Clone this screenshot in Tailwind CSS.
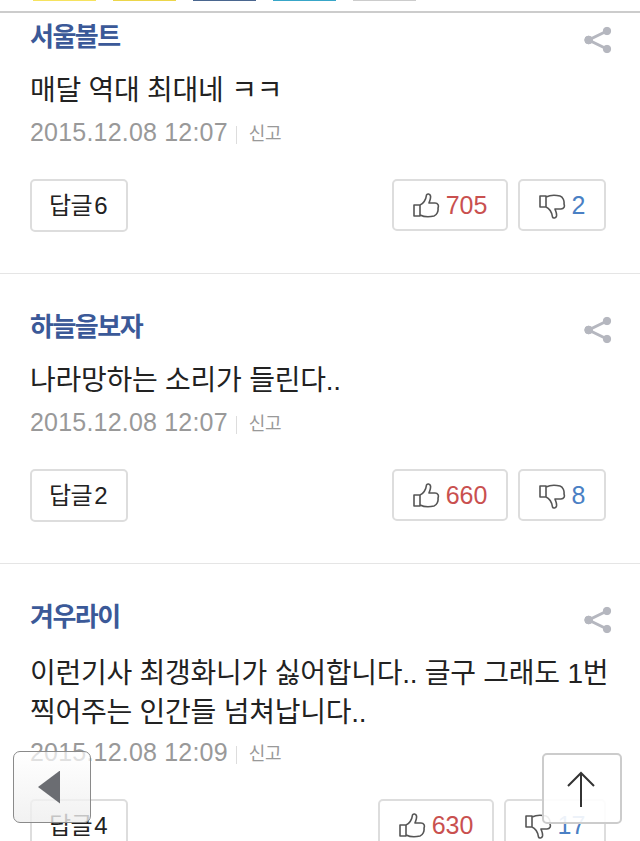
<!DOCTYPE html>
<html lang="ko">
<head>
    <meta charset="UTF-8">
    <title>댓글</title>
    <script src="https://cdn.jsdelivr.net/npm/@tailwindcss/browser@4"></script>
</head>
<body class="bg-white h-[841px] overflow-hidden relative font-['Liberation_Sans','Noto_Sans_CJK_KR',sans-serif] text-[#222]">

    <!-- Share strip, cut off by the top of the page -->
    <div class="h-[13px] border-b-2 border-[#ccc] pl-[33px] flex gap-[17px] items-start">
        <div class="w-[63px] h-[1px] bg-[#f6e35f]"></div>
        <div class="w-[63px] h-[1px] bg-[#ecd64a]"></div>
        <div class="w-[63px] h-[1px] bg-[#4a668f]"></div>
        <div class="w-[63px] h-[1px] bg-[#38a6c8]"></div>
        <div class="w-[63px] h-[1px] bg-[#ccc]"></div>
    </div>

    <!-- Comment 1 -->
    <section class="h-[261px] border-b border-[#e5e5e5] pl-[30px] pr-[34px] relative">
        <div class="pt-[8px] text-[26px] leading-[32px] font-bold tracking-[-1.5px] text-[#3b5998]">서울볼트</div>
        <svg class="absolute right-[28px] top-[13px] w-[28px] h-[28px]" viewBox="0 0 28 28" fill="#b5b7bf" stroke="#b5b7bf"><circle cx="23" cy="5" r="3.700"/><circle cx="4.600" cy="14" r="3.900"/><circle cx="23" cy="23" r="3.700"/><path d="M23 5 4.600 14 23 23" fill="none" stroke-width="3"/></svg>
        <p class="mt-[20px] text-[28px] leading-[36px] tracking-[-0.25px]">매달 역대 최대네 ㅋㅋ</p>
        <div class="mt-[10px] flex items-center h-[28px] text-[#999]">
            <span class="text-[25px] tracking-[0.2px]">2015.12.08 12:07</span>
            <span class="w-px h-[18px] bg-[#ddd] ml-[8px] mr-[12px] mt-[3px]"></span>
            <span class="text-[18px] tracking-[-0.5px] pt-[3px]">신고</span>
        </div>
        <div class="mt-[32px] flex">
            <div class="w-[98px] h-[53px] pr-[2px] border-2 border-[#ddd] rounded-[5px] flex items-center justify-center text-[24px] tracking-[-0.5px] [word-spacing:-4px]">답글 6</div>
            <div class="ml-auto w-[116px] h-[52px] border-2 border-[#ddd] rounded-[5px] flex items-center justify-center gap-[6px] text-[25px] text-[#c9504f]">
                <svg class="w-[27px] h-[25px]" viewBox="0 0 27 25" fill="none" stroke="#555" stroke-width="1.600" stroke-linejoin="round"><path d="M1 12h6v11H1zM7 12c3-1 6-5 6.500-10 .5-1.500 3.500-1.500 4 1 .5 3-1 5-1.500 7h6c3 0 4 2.500 3 5 .5 3-1 7-4 8-4 1-10 1-14-1"/></svg>
                <span class="pt-[2px]">705</span>
            </div>
            <div class="ml-[10px] w-[88px] h-[52px] border-2 border-[#ddd] rounded-[5px] flex items-center justify-center gap-[6px] text-[25px] text-[#4a80c4]">
                <svg class="w-[27px] h-[25px] mt-[3px]" viewBox="0 0 27 25" fill="none" stroke="#555" stroke-width="1.600" stroke-linejoin="round"><path d="M1 13h6V2H1zM7 13c3 1 6 5 6.500 10 .5 1.500 3.500 1.500 4-1 .5-3-1-5-1.500-7h6c3 0 4-2.500 3-5 .5-3-1-7-4-8-4-1-10-1-14 1"/></svg>
                <span class="pt-[2px]">2</span>
            </div>
        </div>
    </section>

    <!-- Comment 2 -->
    <section class="h-[290px] border-b border-[#e5e5e5] pl-[30px] pr-[34px] relative">
        <div class="pt-[37px] text-[26px] leading-[32px] font-bold tracking-[-1.5px] text-[#3b5998]">하늘을보자</div>
        <svg class="absolute right-[28px] top-[42px] w-[28px] h-[28px]" viewBox="0 0 28 28" fill="#b5b7bf" stroke="#b5b7bf"><circle cx="23" cy="5" r="3.700"/><circle cx="4.600" cy="14" r="3.900"/><circle cx="23" cy="23" r="3.700"/><path d="M23 5 4.600 14 23 23" fill="none" stroke-width="3"/></svg>
        <p class="mt-[20px] text-[28px] leading-[36px] tracking-[-0.25px]">나라망하는 소리가 들린다..</p>
        <div class="mt-[10px] flex items-center h-[28px] text-[#999]">
            <span class="text-[25px] tracking-[0.2px]">2015.12.08 12:07</span>
            <span class="w-px h-[18px] bg-[#ddd] ml-[8px] mr-[12px] mt-[3px]"></span>
            <span class="text-[18px] tracking-[-0.5px] pt-[3px]">신고</span>
        </div>
        <div class="mt-[32px] flex">
            <div class="w-[98px] h-[53px] pr-[2px] border-2 border-[#ddd] rounded-[5px] flex items-center justify-center text-[24px] tracking-[-0.5px] [word-spacing:-4px]">답글 2</div>
            <div class="ml-auto w-[116px] h-[52px] border-2 border-[#ddd] rounded-[5px] flex items-center justify-center gap-[6px] text-[25px] text-[#c9504f]">
                <svg class="w-[27px] h-[25px]" viewBox="0 0 27 25" fill="none" stroke="#555" stroke-width="1.600" stroke-linejoin="round"><path d="M1 12h6v11H1zM7 12c3-1 6-5 6.500-10 .5-1.500 3.500-1.500 4 1 .5 3-1 5-1.500 7h6c3 0 4 2.500 3 5 .5 3-1 7-4 8-4 1-10 1-14-1"/></svg>
                <span class="pt-[2px]">660</span>
            </div>
            <div class="ml-[10px] w-[88px] h-[52px] border-2 border-[#ddd] rounded-[5px] flex items-center justify-center gap-[6px] text-[25px] text-[#4a80c4]">
                <svg class="w-[27px] h-[25px] mt-[3px]" viewBox="0 0 27 25" fill="none" stroke="#555" stroke-width="1.600" stroke-linejoin="round"><path d="M1 13h6V2H1zM7 13c3 1 6 5 6.500 10 .5 1.500 3.500 1.500 4-1 .5-3-1-5-1.500-7h6c3 0 4-2.500 3-5 .5-3-1-7-4-8-4-1-10-1-14 1"/></svg>
                <span class="pt-[2px]">8</span>
            </div>
        </div>
    </section>

    <!-- Comment 3 -->
    <section class="pl-[30px] pr-[34px] relative">
        <div class="pt-[37px] text-[26px] leading-[32px] font-bold tracking-[-1.5px] text-[#3b5998]">겨우라이</div>
        <svg class="absolute right-[28px] top-[42px] w-[28px] h-[28px]" viewBox="0 0 28 28" fill="#b5b7bf" stroke="#b5b7bf"><circle cx="23" cy="5" r="3.700"/><circle cx="4.600" cy="14" r="3.900"/><circle cx="23" cy="23" r="3.700"/><path d="M23 5 4.600 14 23 23" fill="none" stroke-width="3"/></svg>
        <p class="mt-[21px] text-[28px] leading-[39px] tracking-[-0.25px] whitespace-nowrap">이런기사 최갱화니가 싫어합니다.. 글구 그래도 1번<br>찍어주는 인간들 넘쳐납니다..</p>
        <div class="mt-[7px] flex items-center h-[28px] text-[#999]">
            <span class="text-[25px] tracking-[0.2px]">2015.12.08 12:09</span>
            <span class="w-px h-[18px] bg-[#ddd] ml-[8px] mr-[12px] mt-[3px]"></span>
            <span class="text-[18px] tracking-[-0.5px] pt-[3px]">신고</span>
        </div>
        <div class="mt-[32px] flex">
            <div class="w-[98px] h-[53px] pr-[2px] border-2 border-[#ddd] rounded-[5px] flex items-center justify-center text-[24px] tracking-[-0.5px] [word-spacing:-4px]">답글 4</div>
            <div class="ml-auto w-[116px] h-[52px] border-2 border-[#ddd] rounded-[5px] flex items-center justify-center gap-[6px] text-[25px] text-[#c9504f]">
                <svg class="w-[27px] h-[25px]" viewBox="0 0 27 25" fill="none" stroke="#555" stroke-width="1.600" stroke-linejoin="round"><path d="M1 12h6v11H1zM7 12c3-1 6-5 6.500-10 .5-1.500 3.500-1.500 4 1 .5 3-1 5-1.500 7h6c3 0 4 2.500 3 5 .5 3-1 7-4 8-4 1-10 1-14-1"/></svg>
                <span class="pt-[2px]">630</span>
            </div>
            <div class="ml-[10px] w-[102px] h-[52px] border-2 border-[#ddd] rounded-[5px] flex items-center justify-center gap-[6px] text-[25px] text-[#4a80c4]">
                <svg class="w-[27px] h-[25px] mt-[3px]" viewBox="0 0 27 25" fill="none" stroke="#555" stroke-width="1.600" stroke-linejoin="round"><path d="M1 13h6V2H1zM7 13c3 1 6 5 6.500 10 .5 1.500 3.500 1.500 4-1 .5-3-1-5-1.500-7h6c3 0 4-2.500 3-5 .5-3-1-7-4-8-4-1-10-1-14 1"/></svg>
                <span class="pt-[2px]">17</span>
            </div>
        </div>
    </section>

    <!-- Floating back button -->
    <div class="absolute left-[13px] top-[751px] w-[78px] h-[72px] rounded-[7px] border-[1.5px] border-[#8a8a8a] bg-gradient-to-b from-white/70 to-[#eeeeee]/80 flex items-center justify-center">
        <div class="w-[22px] h-[33px] bg-[#6b6d72] mr-[6px] [clip-path:polygon(100%_0,100%_100%,0_50%)]"></div>
    </div>

    <!-- Floating top button -->
    <div class="absolute left-[542px] top-[753px] w-[80px] h-[71px] rounded-[5px] border-2 border-[#ccc] bg-white/90 flex items-center justify-center">
        <svg class="w-[30px] h-[38px] mr-[2px]" viewBox="0 0 30 38" fill="none" stroke="#333" stroke-width="2"><path d="M15 3v34M2 16 15 3l13 13"/></svg>
    </div>

</body>
</html>
